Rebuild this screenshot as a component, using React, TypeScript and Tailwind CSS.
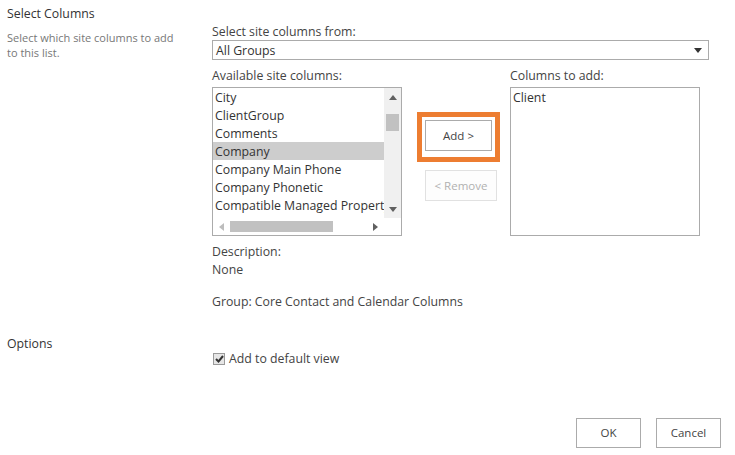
import React from 'react';

const items = [
  'City',
  'ClientGroup',
  'Comments',
  'Company',
  'Company Main Phone',
  'Company Phonetic',
  'Compatible Managed Property',
  'Compatible Managed Name',
];

const Tri = ({ dir, color = '#606060' }: { dir: 'up' | 'down' | 'left' | 'right'; color?: string }) => {
  const pts = {
    up: '0,5 4,0 8,5',
    down: '0,0 8,0 4,5',
    left: '5,0 5,8 0,4',
    right: '0,0 0,8 5,4',
  }[dir];
  const w = dir === 'up' || dir === 'down' ? 8 : 5;
  const h = dir === 'up' || dir === 'down' ? 5 : 8;
  return (
    <svg width={w} height={h} viewBox={`0 0 ${w} ${h}`}>
      <polygon points={pts} fill={color} />
    </svg>
  );
};

const App = () => {
  return (
    <div className="w-[735px] h-[455px] bg-white text-[#444] text-[12.3px] flex flex-col font-['Open_Sans',sans-serif] leading-[18px]">
      {/* Select Columns section */}
      <div className="flex">
        <div className="w-[212px] pl-[7px] pt-[5px] pr-[30px]">
          <div className="text-[#333]">Select Columns</div>
          <div className="mt-[7px] text-[11px] leading-[15px] text-[#777]">Select which site columns to add to this list.</div>
        </div>
        <div className="pt-[22px] w-[497px]">
          <div className="h-[18px] pt-[1px]">Select site columns from:</div>
          <div className="h-[20px] border border-[#ababab] flex items-center justify-between pl-[3px] pr-[6px] text-[#333]">
            <span className="pt-[1px]">All Groups</span>
            <Tri dir="down" color="#333" />
          </div>

          <div className="flex mt-[6px]">
            <div className="w-[190px]">
              <div className="h-[18px] pt-[1px]">Available site columns:</div>
              <div className="mt-[3px] w-[190px] h-[149px] border border-[#ababab] flex flex-col">
                <div className="flex h-[130px]">
                  <div className="w-[171px] overflow-hidden">
                    {items.map((it) => (
                      <div
                        key={it}
                        className={`h-[18px] pt-[1px] pl-[2px] whitespace-nowrap overflow-hidden text-[#333] ${it === 'Company' ? 'bg-[#cdcdcd]' : ''}`}
                      >
                        {it}
                      </div>
                    ))}
                  </div>
                  <div className="w-[17px] bg-[#f0f0f0] flex flex-col items-center">
                    <div className="h-[18px] flex items-center justify-center">
                      <Tri dir="up" />
                    </div>
                    <div className="w-[13px] h-[17px] bg-[#c1c1c1] mt-[8px]" />
                    <div className="flex-1" />
                    <div className="h-[18px] flex items-center justify-center">
                      <Tri dir="down" />
                    </div>
                  </div>
                </div>
                <div className="flex h-[17px] items-center">
                  <div className="w-[17px] flex justify-center">
                    <Tri dir="left" color="#bdbdbd" />
                  </div>
                  <div className="w-[103px] h-[11px] bg-[#c1c1c1]" />
                  <div className="flex-1" />
                  <div className="w-[17px] flex justify-center">
                    <Tri dir="right" />
                  </div>
                  <div className="w-[17px]" />
                </div>
              </div>
            </div>

            <div className="w-[108px] pt-[46px] flex flex-col">
              <div className="ml-[15px] w-[83px] h-[50px] border-[5px] border-[#ed7d31] p-[3px]">
                <button className="w-[67px] h-[31px] border border-[#ababab] bg-white text-[11.5px] text-[#444]">Add &gt;</button>
              </div>
              <button className="ml-[23px] mt-[8px] w-[72px] h-[31px] border border-[#e1e1e1] bg-[#fdfdfd] text-[11.5px] text-[#b1b1b1]">&lt; Remove</button>
            </div>

            <div className="w-[190px]">
              <div className="h-[18px] pt-[1px]">Columns to add:</div>
              <div className="mt-[3px] w-[190px] h-[149px] border border-[#ababab] pl-[2px] pt-[1px] text-[#333]">Client</div>
            </div>
          </div>

          <div className="mt-[7px]">Description:</div>
          <div>None</div>
          <div className="mt-[14px]">Group: Core Contact and Calendar Columns</div>
        </div>
      </div>

      {/* Options section */}
      <div className="flex mt-[24px]">
        <div className="w-[212px] pl-[7px] text-[#333]">Options</div>
        <div className="pt-[15px] flex items-center">
          <div className="ml-[1px] w-[12px] h-[12px] border border-[#9a9a9a] bg-[#e6e6e6] flex items-center justify-center">
            <svg width="9" height="8" viewBox="0 0 9 8">
              <path d="M1 4 L3.5 6.5 L8 1" stroke="#333" strokeWidth="2" fill="none" />
            </svg>
          </div>
          <span className="ml-[4px]">Add to default view</span>
        </div>
      </div>

      {/* Footer buttons */}
      <div className="mt-auto flex justify-end gap-[15px] pr-[14px] pb-[7px]">
        <button className="w-[65px] h-[30px] border border-[#ababab] bg-white text-[11.5px] text-[#444]">OK</button>
        <button className="w-[65px] h-[30px] border border-[#ababab] bg-white text-[11.5px] text-[#444]">Cancel</button>
      </div>
    </div>
  );
};

export default App;
